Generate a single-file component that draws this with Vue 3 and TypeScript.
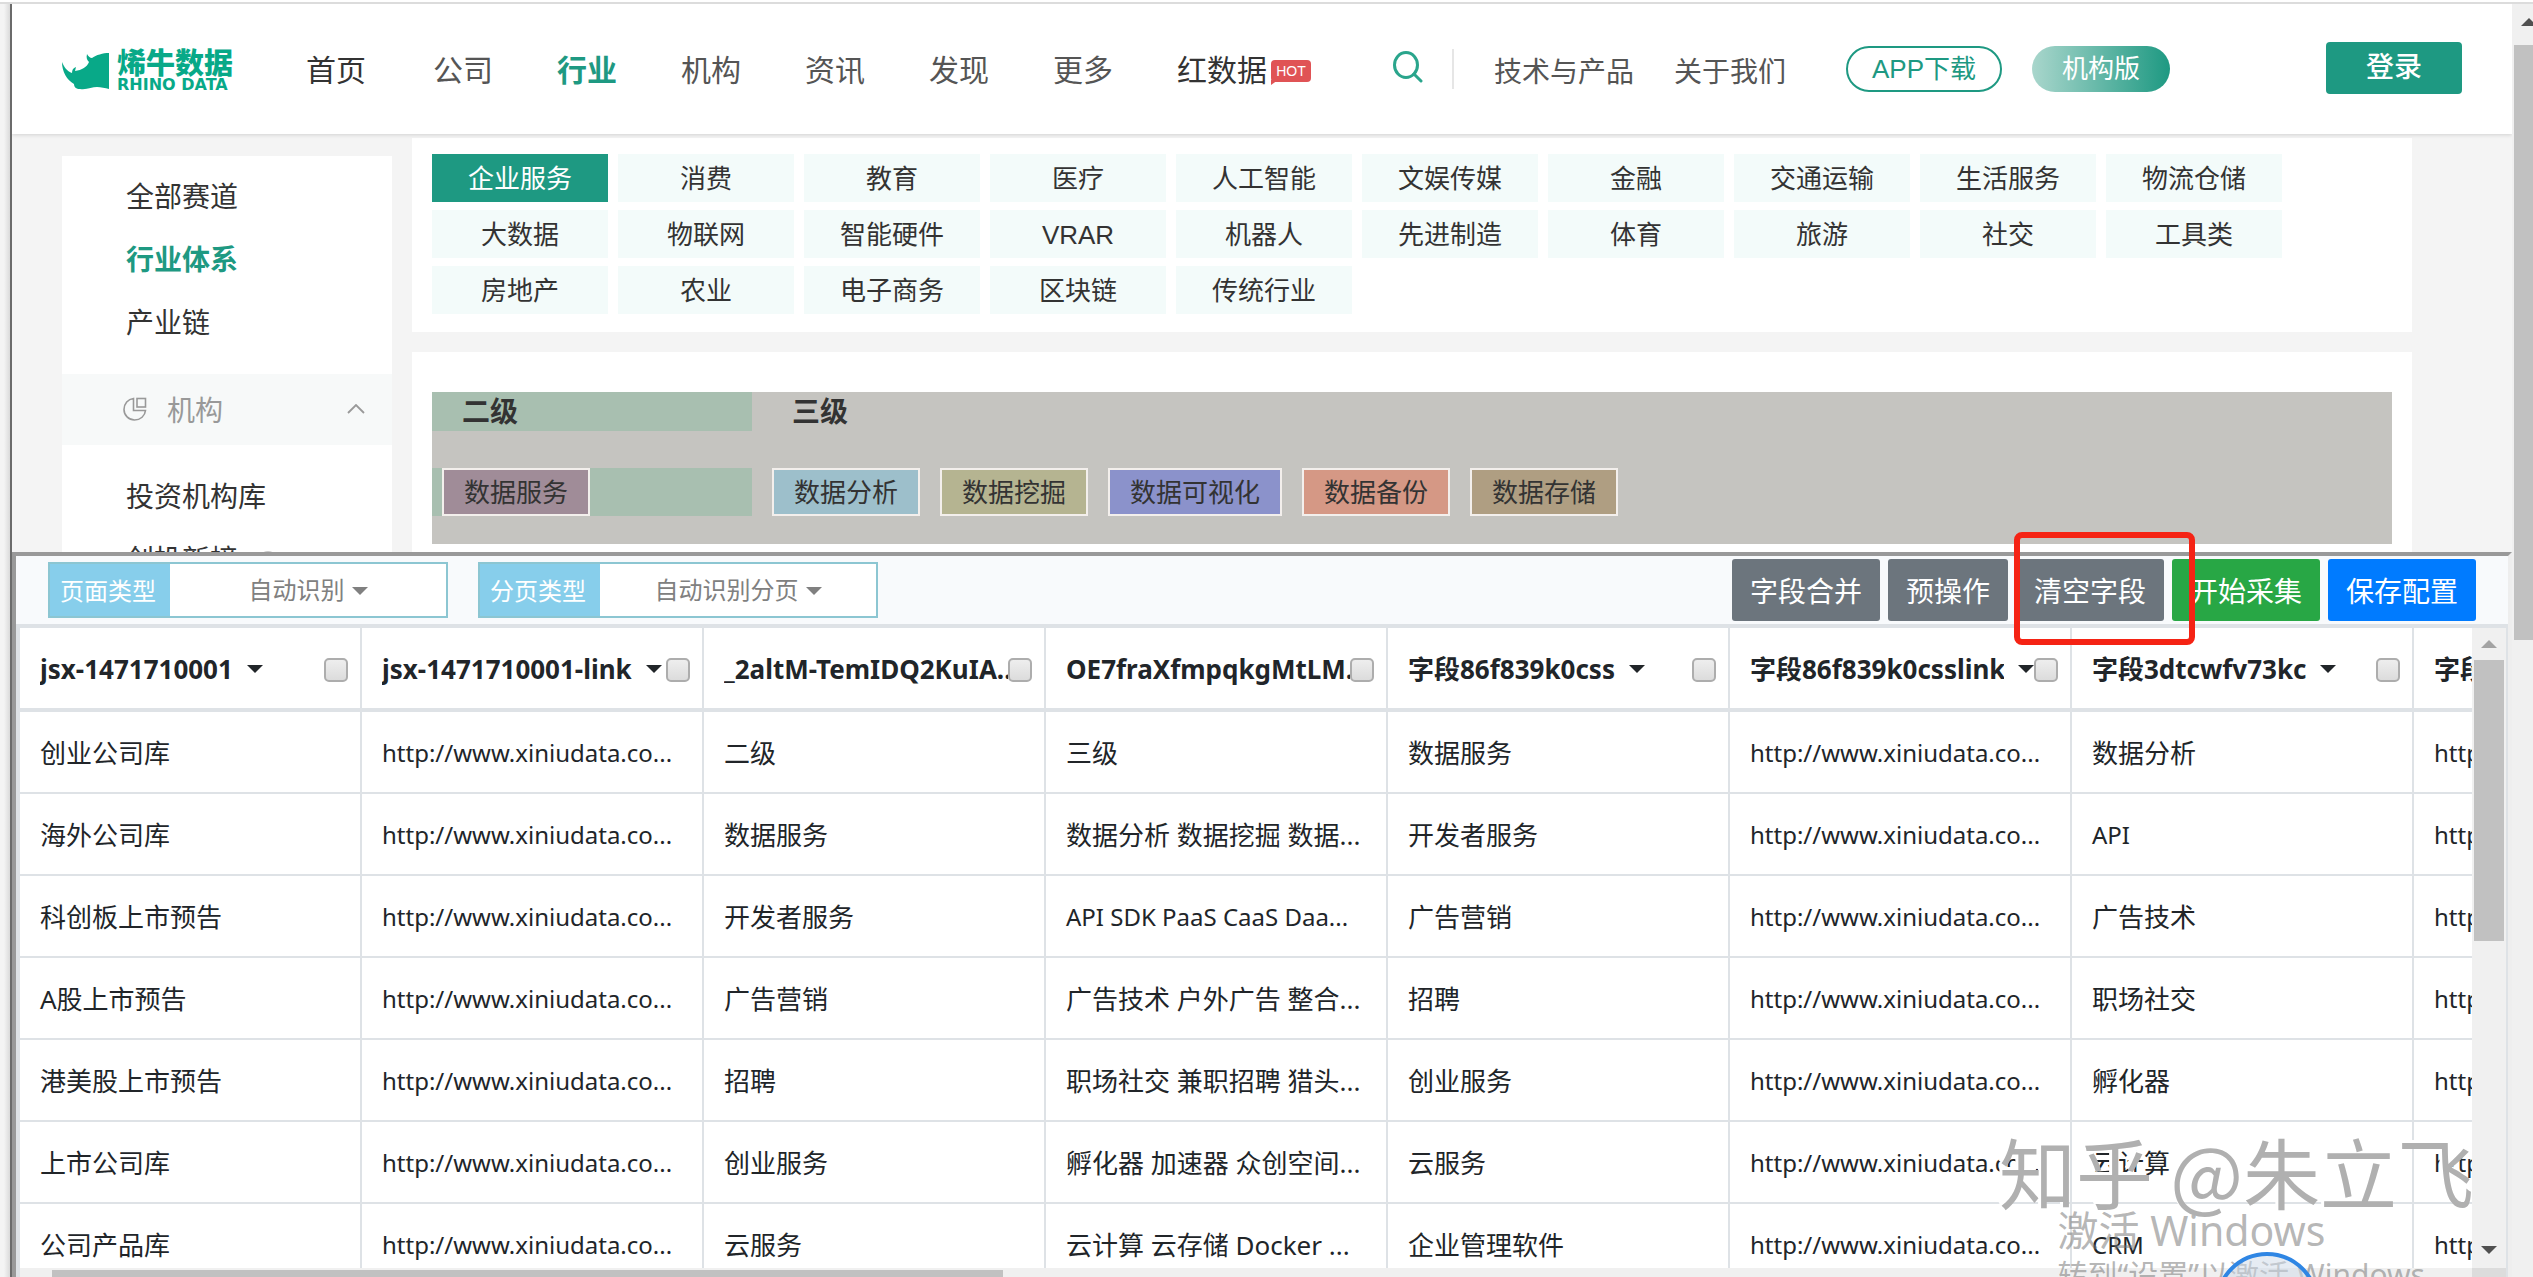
<script setup lang="ts">
import { ref } from 'vue'

interface Tag {
  label: string
  tone: string
}

interface Field {
  name: string
  menu: boolean
  checked: boolean
}

const navLinks: { label: string; state: string }[] = [
  { label: '首页', state: 'home' },
  { label: '公司', state: '' },
  { label: '行业', state: 'active' },
  { label: '机构', state: '' },
  { label: '资讯', state: '' },
  { label: '发现', state: '' },
  { label: '更多', state: '' },
]

const industries: string[] = [
  '企业服务', '消费', '教育', '医疗', '人工智能', '文娱传媒', '金融', '交通运输', '生活服务', '物流仓储',
  '大数据', '物联网', '智能硬件', 'VRAR', '机器人', '先进制造', '体育', '旅游', '社交', '工具类',
  '房地产', '农业', '电子商务', '区块链', '传统行业',
]
const selected = ref<string>('企业服务')

const thirdLevel: Tag[] = [
  { label: '数据分析', tone: 'cyan' },
  { label: '数据挖掘', tone: 'olive' },
  { label: '数据可视化', tone: 'indigo' },
  { label: '数据备份', tone: 'coral' },
  { label: '数据存储', tone: 'tan' },
]

const pageType = ref<string>('自动识别')
const pagingType = ref<string>('自动识别分页')

const fields = ref<Field[]>([
  { name: 'jsx-1471710001', menu: true, checked: false },
  { name: 'jsx-1471710001-link', menu: true, checked: false },
  { name: '_2altM-TemIDQ2KuIA...', menu: false, checked: false },
  { name: 'OE7fraXfmpqkgMtLM...', menu: false, checked: false },
  { name: '字段86f839k0css', menu: true, checked: false },
  { name: '字段86f839k0csslink', menu: true, checked: false },
  { name: '字段3dtcwfv73kc', menu: true, checked: false },
  { name: '字段', menu: false, checked: false },
])

const url = 'http://www.xiniudata.co...'
const rows: string[][] = [
  ['创业公司库', url, '二级', '三级', '数据服务', url, '数据分析', url],
  ['海外公司库', url, '数据服务', '数据分析 数据挖掘 数据...', '开发者服务', url, 'API', url],
  ['科创板上市预告', url, '开发者服务', 'API SDK PaaS CaaS Daa...', '广告营销', url, '广告技术', url],
  ['A股上市预告', url, '广告营销', '广告技术 户外广告 整合...', '招聘', url, '职场社交', url],
  ['港美股上市预告', url, '招聘', '职场社交 兼职招聘 猎头...', '创业服务', url, '孵化器', url],
  ['上市公司库', url, '创业服务', '孵化器 加速器 众创空间...', '云服务', url, '云计算', url],
  ['公司产品库', url, '云服务', '云计算 云存储 Docker ...', '企业管理软件', url, 'CRM', url],
]

// Cells with Latin text only are set one step smaller than Chinese ones.
const isLatin = (text: string): boolean => /^[ -~]+$/.test(text)
</script>

<template>
  <div class="window">
    <div class="window-top"></div>
    <div class="window-body">
      <div class="window-edge"></div>
      <div class="view">
        <div class="site">
          <header class="site-header">
            <a class="logo" href="#">
              <svg width="47" height="38" viewBox="0 0 47 38" aria-hidden="true">
                <path
                  fill="#08a988"
                  d="M0 10 C0 20 5 28 12 32 C12 35 14 37 18 37 C25 38 30 35 35 35 C39 35 43 36 47 37 L47 1 C41 1 34 3 30 6 C28 6 26 4 25 2 C24 6 25 8 27 10 C25 15 20 18 13 19 L14 15 C11 16 10 18 10 21 C5 19 2 15 0 10 Z"
                />
              </svg>
              <span class="logo-text">
                <span class="logo-cn">烯牛数据</span>
                <span class="logo-en">RHINO DATA</span>
              </span>
            </a>
            <nav class="nav">
              <a v-for="link in navLinks" :key="link.label" href="#" :class="link.state">{{ link.label }}</a>
              <a href="#" class="red-data">
                红数据
                <span class="hot">HOT</span>
              </a>
            </nav>
            <button class="search" type="button" aria-label="搜索">
              <svg width="30" height="32" viewBox="0 0 30 32" fill="none" stroke="#2aa58c" stroke-width="3" stroke-linecap="round">
                <ellipse cx="13" cy="14" rx="11.5" ry="12.5" />
                <path d="M21 23 L28 30" />
              </svg>
            </button>
            <span class="divider"></span>
            <nav class="subnav">
              <a href="#">技术与产品</a>
              <a href="#">关于我们</a>
            </nav>
            <button class="pill outline" type="button">APP下载</button>
            <button class="pill filled" type="button">机构版</button>
            <button class="login" type="button">登录</button>
          </header>

          <div class="site-body">
            <aside class="sidebar">
              <ul class="side-list first">
                <li><a href="#">全部赛道</a></li>
                <li><a href="#" class="active">行业体系</a></li>
                <li><a href="#">产业链</a></li>
              </ul>
              <button class="side-group" type="button">
                <svg width="24" height="24" viewBox="0 0 24 24" fill="none" stroke="#999" stroke-width="1.6">
                  <path d="M10.5 1.5 C5 2 1 6.500 1 12.500 A10.500 10.500 0 0 0 11.500 23 C17.500 23 22 18.800 22.500 13.500 H10.500 Z" />
                  <rect x="14" y="1.500" width="8.500" height="8.500" />
                </svg>
                <span>机构</span>
                <svg class="chevron" width="18" height="10" viewBox="0 0 18 10" fill="none" stroke="#999" stroke-width="1.8">
                  <path d="M1 9 L9 1 L17 9" />
                </svg>
              </button>
              <ul class="side-list second">
                <li><a href="#">投资机构库</a></li>
                <li><a href="#" class="with-dot">创投新榜<span class="dot"></span></a></li>
              </ul>
            </aside>

            <main class="content">
              <section class="card industries">
                <button
                  v-for="item in industries"
                  :key="item"
                  type="button"
                  class="industry"
                  :class="{ on: item === selected }"
                  @click="selected = item"
                >{{ item }}</button>
              </section>
              <section class="card">
                <div class="levels">
                  <div class="level-row head">
                    <strong class="second-col">二级</strong>
                    <strong class="third-col">三级</strong>
                  </div>
                  <div class="level-row">
                    <div class="second-col">
                      <a href="#" class="tag mauve">数据服务</a>
                    </div>
                    <div class="third-col">
                      <a v-for="tag in thirdLevel" :key="tag.label" href="#" class="tag" :class="tag.tone">{{ tag.label }}</a>
                    </div>
                  </div>
                </div>
              </section>
            </main>
          </div>
        </div>

        <section class="panel">
          <div class="toolbar">
            <div class="picker">
              <label for="page-type">页面类型</label>
              <div class="picker-value">
                <select id="page-type" v-model="pageType">
                  <option>自动识别</option>
                </select>
                <span class="caret"></span>
              </div>
            </div>
            <div class="picker">
              <label for="paging-type">分页类型</label>
              <div class="picker-value">
                <select id="paging-type" v-model="pagingType">
                  <option>自动识别分页</option>
                </select>
                <span class="caret"></span>
              </div>
            </div>
            <div class="actions">
              <button type="button">字段合并</button>
              <button type="button">预操作</button>
              <span class="marked">
                <button type="button">清空字段</button>
                <span class="marker"></span>
              </span>
              <button type="button" class="green">开始采集</button>
              <button type="button" class="blue">保存配置</button>
            </div>
          </div>

          <div class="grid">
            <div class="grid-main">
              <div class="grid-view">
                <table>
                  <thead>
                    <tr>
                      <th v-for="(field, i) in fields" :key="i" scope="col">
                        <div class="field">
                          <label class="field-name" :for="'field-' + i">{{ field.name }}</label>
                          <span v-if="field.menu" class="caret"></span>
                          <input :id="'field-' + i" v-model="field.checked" type="checkbox" />
                        </div>
                      </th>
                    </tr>
                  </thead>
                  <tbody>
                    <tr v-for="(row, r) in rows" :key="r">
                      <td v-for="(cell, c) in row" :key="c" :class="{ latin: isLatin(cell) }">{{ cell }}</td>
                    </tr>
                  </tbody>
                </table>
              </div>
              <div class="h-track"><div class="h-thumb"></div></div>
            </div>
            <div class="v-track">
              <span class="arrow up"></span>
              <div class="v-thumb"></div>
              <span class="arrow down"></span>
              <span class="corner"></span>
            </div>
          </div>
        </section>
      </div>
      <div class="page-track">
        <span class="arrow up dark"></span>
        <div class="page-thumb"></div>
      </div>
    </div>

    <div class="activation">
      <p class="activation-title">激活 Windows</p>
      <p class="activation-note">转到“设置”以激活 Windows</p>
    </div>
    <div class="bubble"></div>
    <div class="watermark">知乎 @朱立飞</div>
  </div>
</template>

<style>
body {
  margin: 0;
  overflow: hidden;
}
</style>

<style scoped>
.window {
  position: relative;
  display: flex;
  flex-direction: column;
  height: 100vh;
  overflow: hidden;
  background: #fff;
  color: #333;
  font-family: "Liberation Sans", "Noto Sans CJK SC", sans-serif;
  font-size: 26px;
}
.window * {
  box-sizing: border-box;
}
a {
  color: inherit;
  text-decoration: none;
}
button {
  margin: 0;
  padding: 0;
  border: 0;
  background: none;
  color: inherit;
  font: inherit;
  cursor: pointer;
}
.window-top {
  flex: none;
  height: 4px;
  border-bottom: 2px solid #dcdcdc;
}
.window-body {
  display: flex;
  flex: 1;
  min-height: 0;
}
.window-edge {
  flex: none;
  width: 12px;
  border-right: 2px solid #6b6b6b;
  background: linear-gradient(90deg, #f4f4f4 40%, #dadada);
}
.view {
  display: flex;
  flex: 1;
  flex-direction: column;
  min-width: 0;
}

/* Site header */
.site {
  flex: 1;
  min-height: 0;
  overflow: hidden;
  background: #f4f4f4;
}
.site-header {
  position: relative;
  display: flex;
  align-items: center;
  height: 130px;
  padding: 0 50px;
  background: #fff;
  box-shadow: 0 1px 4px rgba(0, 0, 0, 0.14);
  white-space: nowrap;
}
.logo {
  display: flex;
  gap: 8px;
  align-items: center;
  width: 173px;
  padding-top: 4px;
  color: #08a988;
}
.logo-text {
  display: flex;
  flex-direction: column;
}
.logo-cn {
  font-size: 29px;
  font-weight: 900;
  line-height: 28px;
}
.logo-en {
  font-family: "DejaVu Sans", sans-serif;
  font-size: 16px;
  font-weight: 700;
  line-height: 14px;
}
.nav {
  display: flex;
  gap: 64px;
  align-items: center;
  margin-left: 71px;
  padding-top: 4px;
  color: #555;
  font-size: 30px;
  line-height: 40px;
}
.nav .home {
  margin-right: 3px;
  color: #333;
}
.nav .active {
  color: #1e9982;
  font-weight: 700;
}
.red-data {
  display: flex;
  gap: 4px;
  align-items: center;
  color: #333;
}
.hot {
  position: relative;
  width: 40px;
  height: 22px;
  border-radius: 4px;
  background: #e05355;
  color: #fff;
  font-size: 14px;
  line-height: 22px;
  text-align: center;
}
.hot::after {
  position: absolute;
  top: 20px;
  left: 0;
  border-top: 5px solid #e05355;
  border-right: 7px solid transparent;
  content: "";
}
.search {
  display: flex;
  margin-left: 82px;
  padding-bottom: 4px;
}
.divider {
  width: 2px;
  height: 40px;
  margin: 0 40px 0 29px;
  background: #e6e6e6;
}
.subnav {
  display: flex;
  gap: 40px;
  padding-top: 2px;
  color: #555;
  font-size: 28px;
}
.pill {
  height: 46px;
  border-radius: 23px;
  font-size: 26px;
  line-height: 42px;
}
.outline {
  width: 156px;
  margin-left: 60px;
  border: 2px solid #1e9982;
  color: #1e9982;
}
.filled {
  width: 138px;
  margin-left: 30px;
  background: linear-gradient(90deg, #a9d6cc, #1e9982);
  color: #fff;
}
.login {
  width: 136px;
  height: 52px;
  margin-bottom: 2px;
  margin-left: auto;
  border-radius: 4px;
  background: #1e9982;
  color: #fff;
  font-size: 28px;
  font-weight: 500;
  line-height: 50px;
}

/* Site body */
.site-body {
  display: flex;
  gap: 20px;
  align-items: flex-start;
  padding: 4px 100px 0 50px;
}
.sidebar {
  flex: none;
  width: 330px;
  margin-top: 18px;
  background: #fff;
  font-size: 28px;
}
.side-list {
  margin: 0;
  padding: 10px 0 19px 64px;
  list-style: none;
  line-height: 63px;
}
.side-list.second {
  padding-top: 21px;
}
.side-list .active {
  color: #1e9982;
  font-weight: 700;
}
.with-dot {
  display: flex;
  gap: 20px;
  align-items: center;
}
.dot {
  width: 20px;
  height: 20px;
  border-radius: 50%;
  background: #c8c8c8;
}
.side-group {
  display: flex;
  gap: 20px;
  align-items: center;
  width: 100%;
  height: 71px;
  padding: 0 27px 2px 61px;
  background: #f7f9f9;
  color: #999;
}
.chevron {
  margin-left: auto;
}
.content {
  flex: 1;
  min-width: 0;
}
.card {
  margin-bottom: 20px;
  padding: 40px 20px;
  background: #fff;
}
.industries {
  display: flex;
  flex-wrap: wrap;
  gap: 8px 10px;
  padding: 16px 20px 18px;
}
.industry {
  width: 176px;
  height: 48px;
  background: #f3fbfa;
  line-height: 50px;
}
.industry.on {
  background: #1e9982;
  color: #fff;
}
.levels {
  padding-bottom: 28px;
  background: #c5c4c0;
}
.level-row {
  display: flex;
}
.level-row.head {
  height: 39px;
  margin-bottom: 37px;
  font-size: 28px;
  line-height: 41px;
}
.second-col {
  flex: none;
  width: 320px;
  padding-left: 10px;
  background: #a8bfb0;
}
.third-col {
  display: flex;
  gap: 20px;
  padding-left: 20px;
}
.head .second-col {
  padding-left: 30px;
}
.head .third-col {
  padding-left: 40px;
}
.tag {
  display: inline-block;
  height: 48px;
  padding: 0 20px;
  border: 2px solid #f3efec;
  line-height: 46px;
  vertical-align: top;
}
.mauve { background: #a08c98; }
.cyan { background: #9dbfcb; }
.olive { background: #b5b491; }
.indigo { background: #8b92cb; }
.coral { background: #d59885; }
.tan { background: #af9e82; }

/* Collector panel */
.panel {
  display: flex;
  flex: none;
  flex-direction: column;
  height: 725px;
  border: 4px solid #999;
  border-right-color: #eee;
  border-bottom: 0;
  background: #fff;
}
.toolbar {
  display: flex;
  align-items: center;
  height: 68px;
  padding: 0 32px;
  background: #f8fafc;
  white-space: nowrap;
}
.picker {
  display: flex;
  width: 400px;
  height: 56px;
  margin-right: 30px;
  border: 2px solid #8cc6d2;
  background: #fff;
  font-size: 24px;
}
.picker label {
  width: 120px;
  background: #87ceeb;
  color: #fff;
  line-height: 55px;
  text-indent: 10px;
}
.picker-value {
  display: flex;
  flex: 1;
  gap: 7px;
  align-items: center;
  justify-content: center;
  padding-top: 2px;
  color: #808080;
}
.picker select {
  margin: 0;
  padding: 0;
  border: 0;
  background: none;
  color: inherit;
  font: inherit;
  line-height: 36px;
  appearance: none;
}
.caret {
  flex: none;
  border: 8px solid transparent;
  border-top-color: currentColor;
  border-bottom: 0;
}
.actions {
  display: flex;
  gap: 8px;
  margin-left: auto;
}
.actions button {
  height: 62px;
  padding: 0 18px;
  border-radius: 3px;
  background: #6c757d;
  color: #fff;
  font-size: 28px;
}
.actions .green {
  background: #28a745;
}
.actions .blue {
  background: #007bff;
}
.marked {
  position: relative;
}
.marker {
  position: absolute;
  z-index: 1;
  top: -27px;
  right: -31px;
  bottom: -24px;
  left: -2px;
  border: 6px solid #f52314;
  border-radius: 8px;
}

/* Data grid */
.grid {
  display: flex;
  flex: 1;
  min-height: 0;
  border: solid #dee2e6;
  border-width: 4px 2px 0 4px;
}
.grid-main {
  display: flex;
  flex: 1;
  flex-direction: column;
  min-width: 0;
}
.grid-view {
  flex: 1;
  min-height: 0;
  overflow: hidden;
}
table {
  width: 2736px;
  border-spacing: 0;
  table-layout: fixed;
  color: #212529;
  font-family: "Noto Sans", "Noto Sans CJK SC", sans-serif;
  font-size: 26px;
  line-height: 40px;
  text-align: left;
  white-space: nowrap;
}
th,
td {
  height: 82px;
  padding: 2px 0 0 20px;
  border-right: 2px solid #dee2e6;
  border-bottom: 2px solid #dee2e6;
}
th {
  height: 84px;
  padding-right: 12px;
  border-bottom-width: 4px;
}
td {
  overflow: hidden;
}
.latin {
  font-size: 24px;
}
.field {
  display: flex;
  align-items: center;
}
.field-name {
  overflow: hidden;
}
.field .caret {
  margin-left: 14px;
}
.field input {
  flex: none;
  width: 24px;
  height: 24px;
  margin: 2px 0 0 auto;
  border: 2px solid #adadad;
  border-radius: 5px;
  background: linear-gradient(#eee, #dcdcdc);
  appearance: none;
}
.h-track {
  flex: none;
  height: 9px;
  padding: 2px 0 0 32px;
  background: #f0f0f0;
}
.h-thumb {
  width: 39.3%;
  height: 7px;
  background: #c1c1c1;
}
.v-track {
  display: flex;
  flex: none;
  flex-direction: column;
  align-items: center;
  width: 34px;
  padding-top: 12px;
  background: #f0f0f0;
}
.v-thumb {
  width: 30px;
  height: 281px;
  margin-top: 12px;
  background: #c1c1c1;
}
.arrow {
  flex: none;
  border: 8px solid transparent;
}
.arrow.up {
  border-top: 0;
  border-bottom-color: #a3a3a3;
}
.arrow.down {
  margin: auto 0 14px;
  border-top-color: #505050;
  border-bottom: 0;
}
.corner {
  width: 100%;
  height: 9px;
  background: #dcdcdc;
}
.page-track {
  flex: none;
  width: 21px;
  padding: 14px 0 0 2px;
  overflow: hidden;
  background: #f0f0f0;
}
.page-track .arrow {
  display: block;
  width: 16px;
  margin-left: 7px;
}
.arrow.up.dark {
  border-bottom-color: #505050;
}
.page-thumb {
  height: 595px;
  margin-top: 19px;
  background: #c1c1c1;
}

/* Overlays */
.watermark {
  position: absolute;
  right: 59px;
  bottom: 54px;
  color: #b0b0b0;
  font-family: "Noto Sans CJK SC", sans-serif;
  font-size: 77px;
  font-weight: 400;
  line-height: 104px;
  text-shadow: -3px -3px 0 #fff;
  white-space: nowrap;
}
.activation {
  position: absolute;
  right: 108px;
  bottom: -20px;
  color: rgba(120, 120, 120, 0.55);
  font-family: "Noto Sans", "Noto Sans CJK SC", sans-serif;
  white-space: nowrap;
}
.activation p {
  margin: 0;
}
.activation-title {
  font-size: 41px;
  line-height: 46px;
}
.activation-note {
  font-size: 30px;
  line-height: 44px;
}
.bubble {
  position: absolute;
  right: 214px;
  bottom: -79px;
  width: 104px;
  height: 104px;
  border: 4px solid #2f86e4;
  border-radius: 50%;
  background: rgba(205, 218, 232, 0.5);
}
</style>
